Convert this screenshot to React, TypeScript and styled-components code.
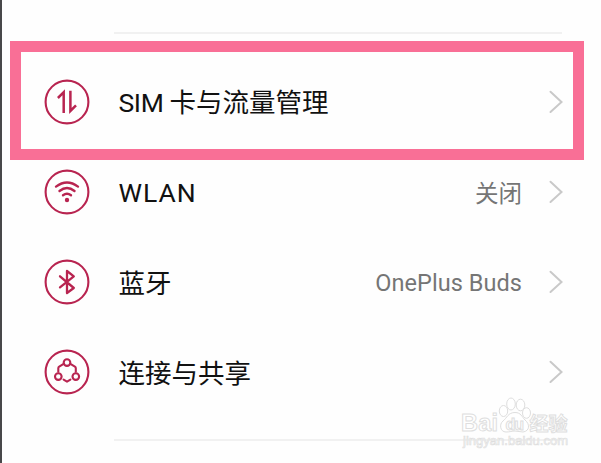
import React from "react";
import styled, { createGlobalStyle } from "styled-components";

const GlobalStyle = createGlobalStyle`
  body { margin: 0; background: #fefefe; overflow: hidden; }
`;

const Screen = styled.main`
  position: relative;
  box-sizing: border-box;
  width: 601px;
  height: 463px;
  padding: 32px 38px 0 42px;
  background: #fefefe;
  border-left: 2px solid #48484a;
  font-family: "Noto Sans CJK SC", sans-serif;
  overflow: hidden;
`;

const Divider = styled.hr`
  height: 2px;
  margin: 0 1px 0 70px;
  border: 0;
  background: #f1f1f1;
`;

const List = styled.ul`
  margin: 0;
  padding: 23px 0 22px;
  list-style: none;
`;

const Row = styled.li`
  display: flex;
  align-items: center;
  height: 90px;
`;

const RowIcon = styled.svg`
  flex: none;
  width: 46px;
  height: 46px;
  margin-right: 28.5px;
  fill: none;
  stroke: #b82450;
  stroke-width: 2.1;
  stroke-linecap: round;
  stroke-linejoin: round;
`;

const Label = styled.span`
  flex: 1;
  font-size: 26.5px;
  line-height: 40px;
  color: #111;
  white-space: pre;
`;

const Latin = styled.span<{ $spacing?: number }>`
  font-family: Roboto, sans-serif;
  letter-spacing: ${(p) => p.$spacing ?? 0}px;
`;

const Value = styled.span`
  margin-right: 27px;
  font-size: 23.5px;
  line-height: 40px;
  color: #757575;
  white-space: pre;
`;

const Chevron = styled.svg`
  flex: none;
  width: 14px;
  height: 24px;
  fill: none;
  stroke: #c9c9c9;
  stroke-width: 2;
  stroke-linecap: round;
`;

const Highlight = styled.div`
  position: absolute;
  box-sizing: border-box;
  left: 7.5px;
  top: 41px;
  width: 574px;
  height: 119px;
  border: 11px solid #f96f96;
`;

const Watermark = styled.svg`
  position: absolute;
  left: 456px;
  top: 393px;
  width: 114px;
  height: 60px;
  font-family: "Liberation Sans", "Noto Sans CJK SC", sans-serif;
  fill: #fff;
  stroke: #dedede;
  stroke-width: 1;
`;

const glyphs = {
  data: (
    <path d="M13.9 19 L19.7 13.2 V34 M26.4 11.8 V32 L32 26.3" strokeWidth="2.5" strokeLinecap="butt" strokeLinejoin="miter" />
  ),
  wifi: (
    <>
      <path d="M12 17.6 Q23 9.5 34 17.6 M15.5 22 Q23 16.2 30.5 22 M19 26.3 Q23 23.3 27 26.3" strokeWidth="2.4" />
      <circle cx="23" cy="31" r="2.2" fill="#b82450" stroke="none" />
    </>
  ),
  bluetooth: <path d="M16 17.3 L29.8 29 L23 34 V12 L29.8 17.3 L16 28.3" strokeWidth="2.3" />,
  share: (
    <>
      <circle cx="23" cy="13.6" r="3.3" />
      <circle cx="14.3" cy="27.6" r="3.3" />
      <circle cx="31.8" cy="27.6" r="3.3" />
      <path d="M19.2 15.2 L15.2 17.6 Q14.3 18.2 14.3 19.3 V22.8 M26.8 15.2 L30.9 17.6 Q31.8 18.2 31.8 19.3 V22.8 M19.6 30.6 L23 32.6 L26.4 30.6" />
    </>
  ),
};

type Item = { icon: keyof typeof glyphs; label: React.ReactNode; value?: React.ReactNode };

const items: Item[] = [
  { icon: "data", label: <><Latin $spacing={-0.4}>SIM </Latin>卡与流量管理</> },
  { icon: "wifi", label: <Latin $spacing={1}>WLAN</Latin>, value: "关闭" },
  { icon: "bluetooth", label: "蓝牙", value: <Latin $spacing={0.06}>OnePlus Buds</Latin> },
  { icon: "share", label: "连接与共享" },
];

export default function App() {
  return (
    <>
      <GlobalStyle />
      <Screen>
        <Divider />
        <List>
          {items.map((item) => (
            <Row key={item.icon}>
              <RowIcon viewBox="0 0 46 46">
                <circle cx="23" cy="23" r="21.4" />
                {glyphs[item.icon]}
              </RowIcon>
              <Label>{item.label}</Label>
              {item.value && <Value>{item.value}</Value>}
              <Chevron viewBox="0 0 14 24">
                <path d="M1.5 1.8 L12.5 12 L1.5 22" />
              </Chevron>
            </Row>
          ))}
        </List>
        <Divider />
        <Highlight />
        <Watermark viewBox="0 0 114 60">
          <text x="3" y="38" fontSize="23.5" fontWeight="700" textLength="37">Bai</text>
          <ellipse cx="45.5" cy="18" rx="4.2" ry="5.5" />
          <ellipse cx="53" cy="11" rx="4.3" ry="6" />
          <ellipse cx="62.5" cy="12" rx="4.3" ry="5.8" />
          <ellipse cx="68.5" cy="20" rx="4" ry="5.3" />
          <path d="M57 19.5 C50 19.5 49 25 45 28 C41 31 42 39 48 39 C52 39 54 38 57 38 C60 38 62 39 65 39 C72 38 72 31 67 27 C64 24 63 19.5 57 19.5 Z" />
          <text x="47.5" y="36.5" fontSize="16" fontWeight="700" textLength="18.5">du</text>
          <text x="71.5" y="37.5" fontSize="19" fontWeight="700" textLength="38">经验</text>
          <text x="5" y="52" fontSize="13" strokeWidth="0.7" textLength="105">jingyan.baidu.com</text>
        </Watermark>
      </Screen>
    </>
  );
}
